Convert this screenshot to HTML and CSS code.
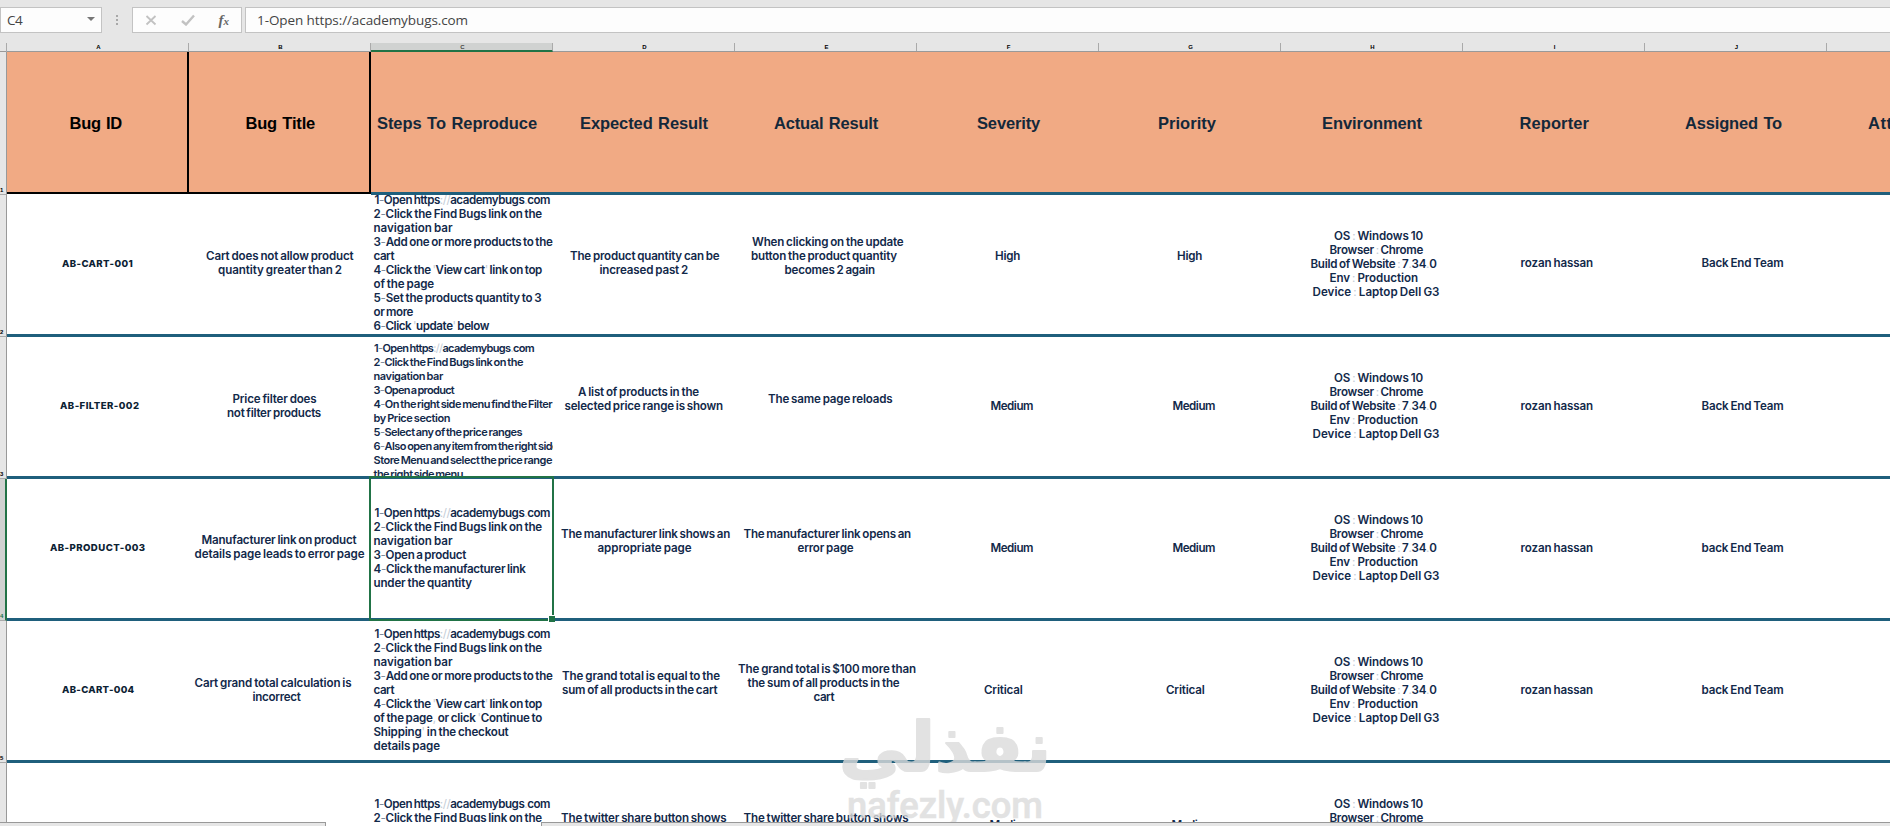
FILE: index.html
```
<!DOCTYPE html>
<html lang="en">
<head>
<meta charset="utf-8">
<title>Bug report</title>
<link rel="stylesheet" href="styles.css">
</head>
<body>
<div class="app">
  <div class="formula-bar">
    <div class="name-box"><span class="fit" data-w="15">C4</span><i class="caret"></i></div>
    <svg class="grip" width="4" height="12" viewBox="0 0 4 12" fill="#a8a8a8"><rect x="1" y="0" width="2" height="2"/><rect x="1" y="4" width="2" height="2"/><rect x="1" y="8" width="2" height="2"/></svg>
    <div class="tools">
      <svg width="12" height="12" viewBox="0 0 12 12" fill="none" stroke="#c2c2c2" stroke-width="1.8"><path d="M1.500 2L10.500 10.500M10.500 2L1.500 10.500"/></svg>
      <svg width="14" height="12" viewBox="0 0 14 12" fill="none" stroke="#c2c2c2" stroke-width="2.4"><path d="M1 7L5 10.500L13 1.500"/></svg>
      <span class="fx">f<small>x</small></span>
    </div>
    <div class="formula"><span class="fit" data-w="211">1-Open https://academybugs.com</span></div>
  </div>
  <div class="col-heads" id="cols"></div>
  <div class="grid" id="grid"></div>
  <div class="bottom"><div class="strip left"></div><div class="strip right"></div></div>
  <svg class="watermark" width="230" height="112" viewBox="0 0 230 112">
    <text class="wm-ar" x="9" y="59" textLength="212" lengthAdjust="spacingAndGlyphs" direction="rtl" text-anchor="end">نفذلي</text>
    <text class="wm-en" x="17" y="106" textLength="196" lengthAdjust="spacingAndGlyphs">nafezly.com</text>
  </svg>
</div>
<script src="sheet.js"></script>
</body>
</html>
```
FILE: styles.css
```
* { box-sizing: border-box; }
body { margin: 0; background: #fff; }
.app { position: relative; width: 1890px; height: 826px; overflow: hidden; display: flex; flex-direction: column; font-family: "Inter", sans-serif; color: #12294a; }
.formula-bar { flex: none; height: 43px; padding-top: 7px; background: #e6e6e6; display: flex; align-items: flex-start; font: 13.5px/24px "Open Sans", sans-serif; color: #444; }
.name-box { width: 102px; height: 26px; background: #fdfdfd; border: 1px solid #c3c3c3; padding: 0 6px 0 6px; display: flex; justify-content: space-between; align-items: center; }
.caret { border: 4px solid transparent; border-top: 4px solid #777; border-bottom: 0; margin-top: -3px; }
.grip { margin: 8px 13px 0 13px; }
.tools { width: 110px; height: 26px; background: #fdfdfd; border: 1px solid #c3c3c3; display: flex; align-items: center; justify-content: space-between; padding: 0 12px; }
.fx { font: italic bold 15px/22px "Liberation Serif", serif; color: #666; }
.fx small { font-size: 11px; }
.formula { margin-left: 3px; flex: 1; height: 26px; background: #fdfdfd; border: 1px solid #c3c3c3; border-right: 0; padding-left: 11px; }
.fit { display: inline-block; white-space: pre; }
.col-heads { flex: none; height: 9px; display: grid; grid-template-columns: 7px repeat(11, 182px); background: #e6e6e6; border-bottom: 1px solid #999; }
.corner { border-right: 1px solid #aaa; }
.col-head { height: 8px; padding-left: 2px; border-right: 1px solid #aaa; font: bold 6px/8px "Liberation Sans", sans-serif; color: #000; text-align: center; }
.col-head.active { height: 9px; background: #d0d2d1; color: #444; border-bottom: 2px solid #217346; }
.grid { flex: none; height: 774px; }
.row { height: 142px; display: grid; grid-template-columns: 7px repeat(11, 182px); }
.row.head { height: 143px; }
.row-num { background: #e6e6e6; border-right: 1px solid #999; border-bottom: 1px solid #aaa; font: bold 6px/7px "Liberation Sans", sans-serif; color: #000; display: flex; align-items: flex-end; overflow: hidden; }
.row-num.active { background: #d0d2d1; border-right: 2px solid #217346; color: #217346; }
.cell { position: relative; overflow: hidden; border-bottom: 3px solid #1f5f7c; min-width: 0; }
.head .cell { background: #f1aa84; color: #14283a; }
.head .cell.dark { border-bottom: 2px solid #000; border-right: 2px solid #000; height: 142px; color: #000; }
.line { width: max-content; height: 14px; font-size: 11.6px; line-height: 14px; font-weight: 600; white-space: pre; word-spacing: -.8px; }
.tight .line { font-size: 11px; word-spacing: -1px; }
.id .line { font-size: 9.6px; font-weight: 800; color: #0c2233; }
.head .line { font: bold 16.5px/20px "Liberation Sans", sans-serif; height: 20px; word-spacing: 1px; }
.dim { color: #c3ccd6; font-weight: 400; }
.mid { color: #7d8b9c; font-weight: 400; }
.selection { position: absolute; left: 369px; top: 476px; width: 185px; height: 145px; border: 2px solid #217346; }
.selection::after { content: ""; position: absolute; right: -3px; bottom: -3px; width: 6px; height: 6px; background: #217346; border-left: 1px solid #fff; border-top: 1px solid #fff; }
.bottom { position: absolute; left: 0; right: 0; bottom: 0; height: 4px; display: flex; justify-content: space-between; background: #fff; z-index: 2; }
.strip { background: #e6e6e6; border-top: 1px solid #999; }
.strip.left { width: 326px; border-right: 1px solid #999; }
.strip.right { width: 1349px; border-left: 1px solid #999; }
.watermark { position: absolute; left: 830px; top: 712px; fill: #dbdbdb; stroke: #dbdbdb; opacity: .8; }
.wm-ar { font: bold 68px "DejaVu Sans", sans-serif; stroke-width: 2px; stroke-linejoin: round; }
.wm-en { font: 500 37px "Roboto", sans-serif; stroke-width: .6px; }
```
FILE: sheet.js
```
const LETTERS = 'ABCDEFGHIJK';
const COL0 = 7, COLW = 182;

// Cell: [column, centre y of first line, [[text, x start, x end], ...]]
const open = ['1-Open https://academybugs.com', 374.5, 550];
const find = ['2-Click the Find Bugs link on the', 373.5, 542];
const nav = ['navigation bar', 373.5, 452.5];
const add = ['3-Add one or more products to the', 373.5, 552.5];
const env = [['OS : Windows 10', 1334, 1423], ['Browser : Chrome', 1329.5, 1423], ['Build of Website : 7.34.0', 1310.5, 1436.5], ['Env : Production', 1329.5, 1418], ['Device : Laptop Dell G3', 1312.5, 1439.5]];
const people = (y, team) => [[7, y - 27.7, env], [8, y, [['rozan hassan', 1520.5, 1593]]], [9, y, [[team, 1701.5, 1783.5]]]];
const level = (y, text, f0, f1, g0, g1) => [[5, y, [[text, f0, f1]]], [6, y, [[text, g0, g1]]]];

const rows = [
  { top: 52, cells: [['Bug ID', 69.5, 122], ['Bug Title', 245.5, 315], ['Steps To Reproduce', 377, 537], ['Expected Result', 580, 708], ['Actual Result', 774, 878], ['Severity', 977, 1040], ['Priority', 1158, 1216], ['Environment', 1322, 1422], ['Reporter', 1519.5, 1589], ['Assigned To', 1685, 1782], ['Attachment', 1868, 1964]].map((t, i) => [i, 122.5, [t]]) },
  { top: 195, cells: [
    [0, 264, [['AB-CART-001', 62, 133]]],
    [1, 256.3, [['Cart does not allow product', 206, 353.5], ['quantity greater than 2', 218, 342]]],
    [2, 200.3, [open, find, nav, add, ['cart', 373.5, 394], ["4-Click the 'View cart' link on top", 373.5, 542], ['of the page', 373.5, 434], ['5-Set the products quantity to 3', 373.5, 541.5], ['or more', 373.5, 413], ["6-Click 'update' below", 373.5, 489]]],
    [3, 256.3, [['The product quantity can be', 570, 719.5], ['increased past 2', 599.5, 688]]],
    [4, 242.3, [['When clicking on the update', 752, 903.5], ['button the product quantity', 751, 897], ['becomes 2 again', 784.5, 875]]],
    ...level(256.3, 'High', 995, 1020, 1177, 1202), ...people(263.3, 'Back End Team')] },
  { top: 337, cells: [
    [0, 406, [['AB-FILTER-002', 60, 139.5]]],
    [1, 398.5, [['Price filter does', 232.5, 316.5], ['not filter products', 227, 321]]],
    [2, 347.7, [['1-Open https://academybugs.com', 374, 534], ['2-Click the Find Bugs link on the', 373.5, 523], ['navigation bar', 373.5, 443], ['3-Open a product', 373.5, 454], ['4-On the right side menu find the Filter', 373.5, 552], ['by Price section', 373.5, 450], ['5-Select any of the price ranges', 373.5, 522], ['6-Also open any item from the right side', 373.5, 558], ['Store Menu and select the price range', 373.5, 552], ['the right side menu', 373.5, 463]], 'tight'],
    [3, 391.7, [['A list of products in the', 578, 699], ['selected price range is shown', 564.5, 723]]],
    [4, 398.5, [['The same page reloads', 768, 892.5]]],
    ...level(405.5, 'Medium', 990.5, 1033, 1172.5, 1215), ...people(405.7, 'Back End Team')] },
  { top: 479, active: true, cells: [
    [0, 548, [['AB-PRODUCT-003', 50, 145.5]]],
    [1, 540.3, [['Manufacturer link on product', 201.5, 356.5], ['details page leads to error page', 194.5, 364.5]]],
    [2, 512.7, [open, find, nav, ['3-Open a product', 373.5, 466], ['4-Click the manufacturer link', 373.5, 525.5], ['under the quantity', 373.5, 472]]],
    [3, 533.5, [['The manufacturer link shows an', 561, 730], ['appropriate page', 597.5, 691.5]]],
    [4, 533.5, [['The manufacturer link opens an', 743.5, 911], ['error page', 797.5, 853.5]]],
    ...level(547.5, 'Medium', 990.5, 1033, 1172.5, 1215), ...people(547.7, 'back End Team')] },
  { top: 621, cells: [
    [0, 690, [['AB-CART-004', 62, 134.5]]],
    [1, 682.5, [['Cart grand total calculation is', 194.5, 351.5], ['incorrect', 252.5, 300.5]]],
    [2, 633.7, [open, find, nav, add, ['cart', 373.5, 394], ["4-Click the 'View cart' link on top", 373.5, 542], ["of the page, or click 'Continue to", 373.5, 542], ["Shipping' in the checkout", 373.5, 508.5], ['details page', 373.5, 440]]],
    [3, 675.5, [['The grand total is equal to the', 562, 720], ['sum of all products in the cart', 562, 717.5]]],
    [4, 668.5, [['The grand total is $100 more than', 738, 916], ['the sum of all products in the', 747.5, 899.5], ['cart', 813.5, 834]]],
    ...level(689.5, 'Critical', 984, 1022.5, 1166, 1204.5), ...people(689.7, 'back End Team')] },
  { top: 763, cells: [
    [2, 803.5, [open, find]],
    [3, 817.5, [['The twitter share button shows', 561, 726.5]]],
    [4, 817.5, [['The twitter share button shows', 743.5, 908.5]]],
    ...level(824.5, 'Medium', 989.5, 1032, 1171.5, 1214), [7, 803.5, env.slice(0, 2)]] }
];

function el(cls, parent) {
  const node = document.createElement('div');
  node.className = cls;
  parent.appendChild(node);
  return node;
}

// Spreads letters so that a line takes the given width.
function fit(node, width) {
  const natural = node.getBoundingClientRect().width;
  node.style.letterSpacing = (width - natural) / node.textContent.length + 'px';
}

const cols = document.getElementById('cols');
el('corner', cols);
[...LETTERS].forEach((l, i) => { el('col-head' + (i === 2 ? ' active' : ''), cols).textContent = l; });

const grid = document.getElementById('grid');
rows.forEach((row, r) => {
  const rowEl = el('row' + (r === 0 ? ' head' : ''), grid);
  el('row-num' + (row.active ? ' active' : ''), rowEl).textContent = r + 1;
  for (let c = 0; c < 11; c++) {
    const cell = el('cell' + (r === 0 && c < 2 ? ' dark' : '') + (r > 0 && c === 0 ? ' id' : ''), rowEl);
    const data = row.cells.find(d => d[0] === c);
    if (!data) continue;
    if (data[3]) cell.classList.add(data[3]);
    data[2].forEach(([text, x0, x1], i) => {
      const line = el('line', cell);
      line.innerHTML = r === 0 || c === 0 ? text : text.replace(/\/\/|[:.,']/g, '<span class="dim">$&</span>').replace(/^(\d)-/, '$1<span class="mid">-</span>');
      if (i === 0) line.style.marginTop = Math.round(data[1] - row.top - (r === 0 ? 10 : 7)) + 'px';
      line.style.marginLeft = x0 - COL0 - c * COLW + 'px';
      fit(line, x1 - x0);
    });
  }
});
el('selection', document.querySelector('.app'));
document.querySelectorAll('.fit').forEach(n => fit(n, +n.dataset.w));
```
